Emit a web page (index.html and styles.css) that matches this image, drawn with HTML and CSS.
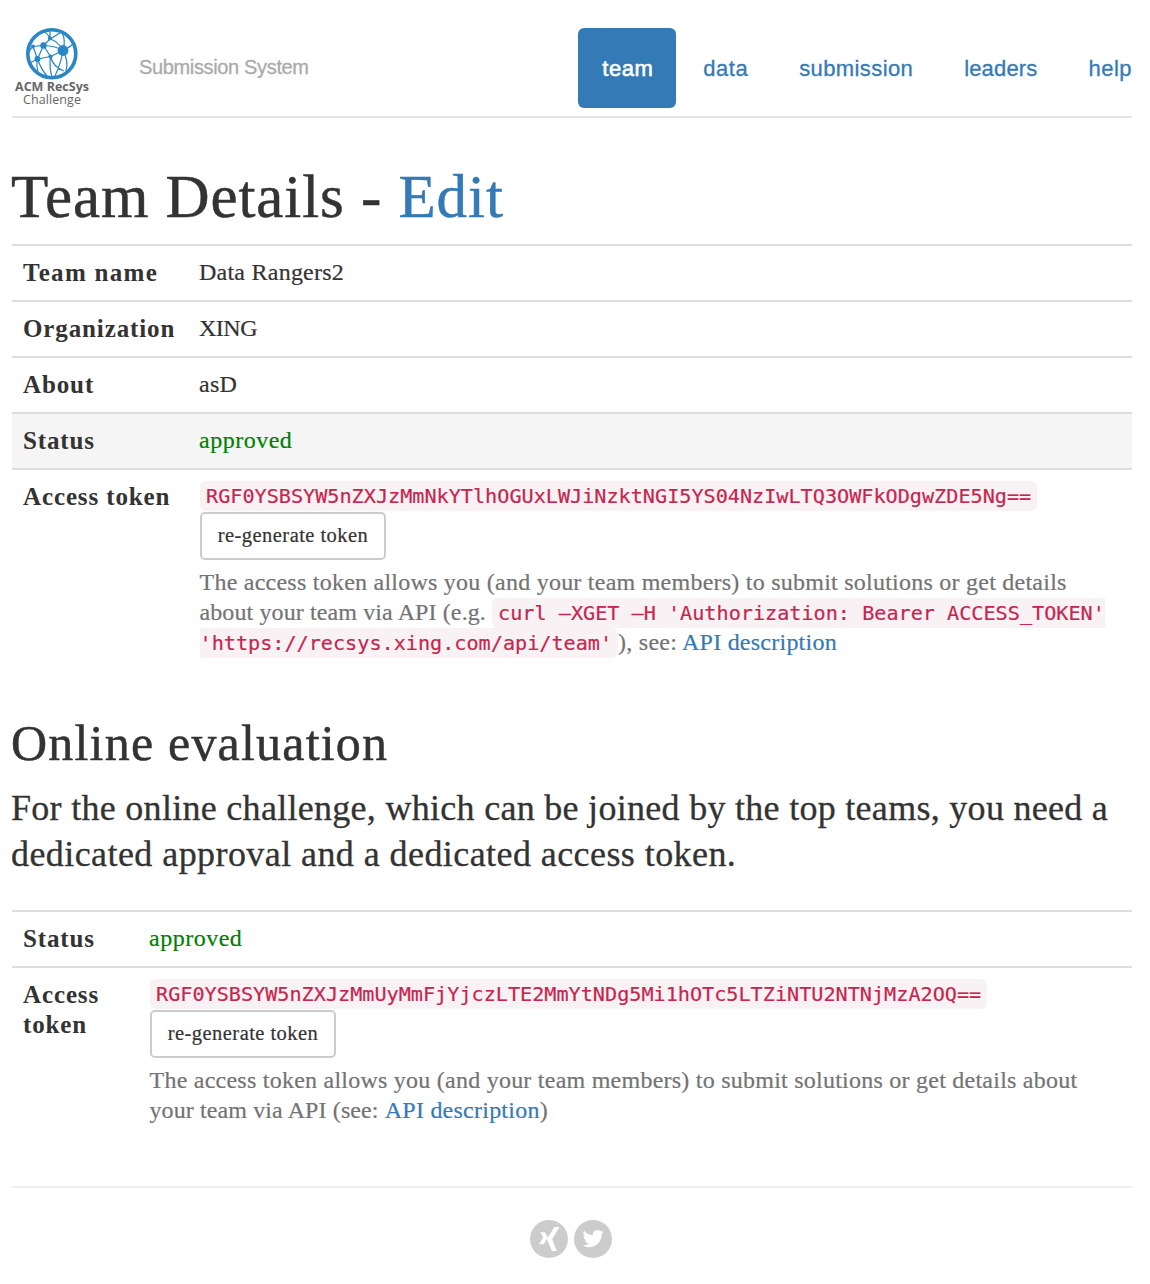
FILE: index.html
```html
<!DOCTYPE html>
<html lang="en">
<head>
<meta charset="utf-8">
<title>Team Details</title>
<link rel="stylesheet" href="styles.css">
</head>
<body>
<div class="container">
  <header class="header">
    <a class="logo" href="#">
      <svg width="80" height="86" viewBox="12 24 80 86" role="img" aria-label="ACM RecSys Challenge">
        <circle cx="51.8" cy="53.7" r="24" fill="#fff" stroke="#2a86c5" stroke-width="3.6"/>
        <g fill="none" stroke="#2a86c5" stroke-width="1.25">
          <path d="M33 46.5L43.5 45.5Q56 46 63 50.5M43.5 45.5L37.5 59L33 46.5M43.5 45.5L50 39L60 33M50 39Q48 33 43 31M50 39Q58 41 63 50.5M43.5 45.5L50.5 56.5L63 50.5M37.5 59L50.5 56.5M63 50.5Q70 47 73 44M63 50.5Q66 40 62 33M63 50.5Q69 62 66 71M63 50.5Q61 63 55 76M50.5 56.5Q53 67 64 71M50.5 56.5Q49 67 52 77M37.5 59Q41 69 47 76M37.5 59L30 63M37.5 59Q36 66 38 71M33 46.5Q30 49 28 54M50 39L50 30"/>
        </g>
        <g fill="#2a86c5"><circle cx="63" cy="50.5" r="5.4"/><circle cx="43.5" cy="45.5" r="3.2"/><circle cx="37.5" cy="59" r="3"/><circle cx="50" cy="38.5" r="2.1"/><circle cx="33" cy="46.5" r="1.9"/><circle cx="50.5" cy="56.5" r="2.1"/></g>
        <text class="logo-bold" x="15" y="91" textLength="74">ACM RecSys</text>
        <text class="logo-light" x="23" y="103.5" textLength="58">Challenge</text>
      </svg>
    </a>
    <span class="subtitle">Submission System</span>
    <nav class="nav">
      <a class="nav-item active" href="#">team</a>
      <a class="nav-item" href="#">data</a>
      <a class="nav-item nav-wide" href="#">submission</a>
      <a class="nav-item nav-leaders" href="#">leaders</a>
      <a class="nav-item" href="#">help</a>
    </nav>
  </header>

  <h1>Team Details - <a href="#">Edit</a></h1>
  <table class="details">
    <tr><th class="name">Team name</th><td>Data Rangers2</td></tr>
    <tr><th>Organization</th><td class="caps">XING</td></tr>
    <tr><th>About</th><td>asD</td></tr>
    <tr class="hover"><th>Status</th><td class="approved">approved</td></tr>
    <tr><th>Access token</th><td>
      <code>RGF0YSBSYW5nZXJzMmNkYTlhOGUxLWJiNzktNGI5YS04NzIwLTQ3OWFkODgwZDE5Ng==</code><br>
      <button class="btn">re-generate token</button>
      <p class="help">The access token allows you (and your team members) to submit solutions or get details<br><span class="tight">about your team via API (e.g. </span><code>curl –XGET –H 'Authorization: Bearer ACCESS_TOKEN'<br>'https://recsys.xing.com/api/team'</code>), see: <a href="#">API description</a></p>
    </td></tr>
  </table>

  <h2>Online evaluation</h2>
  <p class="lead"><span class="lead-first">For the online challenge, which can be joined by the top teams, you need a</span><br>dedicated approval and a dedicated access token.</p>
  <table class="details online">
    <tr><th>Status</th><td class="approved">approved</td></tr>
    <tr><th>Access<br>token</th><td>
      <code>RGF0YSBSYW5nZXJzMmUyMmFjYjczLTE2MmYtNDg5Mi1hOTc5LTZiNTU2NTNjMzA2OQ==</code><br>
      <button class="btn">re-generate token</button>
      <p class="help">The access token allows you (and your team members) to submit solutions or get details about<br><span class="tight">your team via API (see: </span><a href="#">API description</a>)</p>
    </td></tr>
  </table>

  <footer class="footer">
    <a href="#" aria-label="XING"><svg width="38" height="38" viewBox="0 0 38 38"><circle cx="19" cy="19" r="19" fill="#ccc"/><path fill="#fff" d="M10.2 12.2H14.8L17.8 17.2L13.7 24.2H9L13.2 17.2ZM24.3 7H29.4L22.2 19.2L26.8 31H21.9L16.9 19.2Z"/></svg></a>
    <a href="#" aria-label="Twitter"><svg width="38" height="38" viewBox="0 0 38 38"><circle cx="19" cy="19" r="19" fill="#ccc"/><path fill="#fff" transform="translate(8.6 8) scale(.88)" d="M23.95 4.57a10 10 0 0 1-2.82.78 4.96 4.96 0 0 0 2.16-2.73c-.95.56-2 .96-3.13 1.19a4.92 4.92 0 0 0-8.38 4.48C7.69 8.1 4.07 6.13 1.64 3.16a4.92 4.92 0 0 0 1.52 6.57 4.9 4.9 0 0 1-2.23-.61v.06c0 2.38 1.7 4.37 3.95 4.82a5 5 0 0 1-2.21.09 4.94 4.94 0 0 0 4.6 3.42A9.87 9.87 0 0 1 0 19.54a13.99 13.99 0 0 0 7.55 2.21c9.05 0 14-7.5 14-13.98 0-.21 0-.42-.02-.63a9.94 9.94 0 0 0 2.46-2.55z"/></svg></a>
  </footer>
</div>
</body>
</html>
```
FILE: styles.css
```css
* { box-sizing: border-box; }
body { margin: 0; background: #fff; color: #333; font: 24px/30px "Liberation Serif", serif; letter-spacing: .24px; }
a { color: #337ab7; text-decoration: none; }
.container { width: 1120px; margin: 0 0 0 12px; }
.header { display: flex; align-items: flex-start; height: 118px; padding-top: 28px; border-bottom: 2px solid #e5e5e5; font-family: "Liberation Sans", sans-serif; }
.logo { width: 80px; height: 86px; margin-top: -4px; }
.logo svg { display: block; }
.logo text { font-family: "Open Sans", sans-serif; letter-spacing: 0; fill: #666; }
.logo .logo-bold { font-size: 12.5px; font-weight: 700; }
.logo .logo-light { font-size: 12.5px; }
.subtitle { margin-left: 47px; line-height: 78px; font-size: 20px; letter-spacing: -.35px; color: #aaa; white-space: nowrap; -webkit-text-stroke: .3px #aaa; }
.nav { display: flex; gap: 3px; margin-left: auto; }
.nav-item { height: 80px; padding: 0 24px; border-radius: 6px; font-size: 22px; line-height: 81px; letter-spacing: .5px; -webkit-text-stroke: .3px #337ab7; }
.nav-wide { letter-spacing: .4px; }
.nav-leaders { letter-spacing: .15px; }
.nav-item:last-child { padding-right: 0; }
.active { width: 98px; color: #fff; background: #337ab7; -webkit-text-stroke: .6px #fff; }
h1, h2 { font-weight: 400; margin: 0; -webkit-text-stroke: .5px; }
h1 { margin: 46px 0 14px -1px; font-size: 61px; line-height: 66px; letter-spacing: .93px; }
.details { width: 100%; border-collapse: separate; border-spacing: 0; table-layout: fixed; }
th, td { padding: 11px 11px 13px; border-top: 2px solid #ddd; text-align: left; vertical-align: top; white-space: nowrap; }
td { -webkit-text-stroke: .2px; }
th { width: 176px; padding: 12px 11px; font-size: 25px; letter-spacing: .88px; }
.name { letter-spacing: 1.3px; }
.caps { letter-spacing: -.5px; }
td.approved { color: green; letter-spacing: .5px; }
.hover { background: #f5f5f5; }
.online th { width: 126px; }
code { padding: 3px 6px; border-radius: 6px; background: #f9f2f4; color: #c7254e; font: 20.17px/20px "DejaVu Sans Mono", monospace; letter-spacing: 0; }
td > code { margin-left: 1px; vertical-align: 1px; }
.btn { display: block; width: 186px; height: 48px; margin: 1px 0 0 1px; padding: 0 0 2px; border: 2px solid #ccc; border-radius: 5px; background: #fff; color: #333; font: 20.5px/30px "Liberation Serif", serif; letter-spacing: .45px; -webkit-text-stroke: .2px; }
.help { margin: 7px 0 0 .5px; color: #737373; }
.tight { letter-spacing: .11px; }
h2 { margin: 46px 0 0 -1px; font-size: 50px; line-height: 54px; letter-spacing: 1.2px; }
.lead { margin: 15px 0 33px -1px; font-size: 36px; line-height: 46px; letter-spacing: .43px; white-space: nowrap; -webkit-text-stroke: .3px; }
.lead-first { letter-spacing: .29px; }
.footer { display: flex; justify-content: center; gap: 6px; margin-top: 48px; padding: 32px 2px 0 0; border-top: 2px solid #eee; }
.footer svg { display: block; }
```
